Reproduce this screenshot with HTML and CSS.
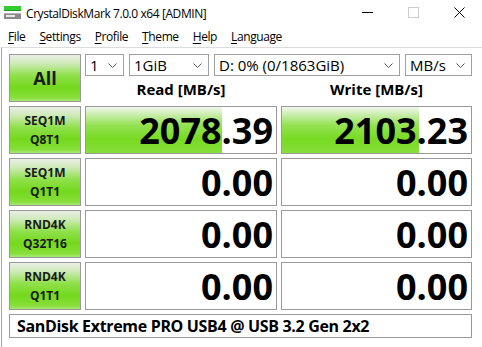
FILE: index.html
```html
<!DOCTYPE html>
<html lang="en">
<head>
  <meta charset="UTF-8">
  <title>CrystalDiskMark 7.0.0 x64 [ADMIN]</title>
  <link rel="stylesheet" href="styles.css">
</head>
<body>
  <div class="titlebar">
    <svg class="app-icon" width="18" height="16" viewBox="0 0 18 16">
      <rect x="0" y="0" width="17" height="5" fill="#33cc33"/>
      <rect x="0" y="4" width="17" height="1" fill="#1f9a1f"/>
      <rect x="0" y="7" width="17" height="6" fill="#8a8a8a"/>
      <rect x="0" y="7" width="17" height="1" fill="#b5b5b5"/>
      <rect x="2" y="9" width="9" height="2" fill="#e8e8e8"/>
    </svg>
    <span class="title">CrystalDiskMark 7.0.0 x64 [ADMIN]</span>
    <div class="controls">
      <span class="ctl">
        <svg width="11" height="11" viewBox="0 0 11 11"><line x1="0" y1="5.5" x2="11" y2="5.5" stroke="#000" stroke-width="1"/></svg>
      </span>
      <span class="ctl">
        <svg width="11" height="11" viewBox="0 0 11 11"><rect x="0.5" y="0.5" width="10" height="10" fill="none" stroke="#cccccc" stroke-width="1"/></svg>
      </span>
      <span class="ctl">
        <svg width="11" height="11" viewBox="0 0 11 11"><path d="M0.5 0.5 L10.5 10.5 M10.5 0.5 L0.5 10.5" stroke="#000" stroke-width="1"/></svg>
      </span>
    </div>
  </div>

  <div class="menubar">
    <span class="menu"><u>F</u>ile</span>
    <span class="menu"><u>S</u>ettings</span>
    <span class="menu"><u>P</u>rofile</span>
    <span class="menu"><u>T</u>heme</span>
    <span class="menu"><u>H</u>elp</span>
    <span class="menu"><u>L</u>anguage</span>
  </div>

  <div class="main">
    <div class="grid">
      <div class="test-btn all">All</div>

      <div class="top-right">
        <div class="combos">
          <div class="combo c-count"><span>1</span><svg width="9" height="5" viewBox="0 0 9 5"><polyline points="0.5,0.5 4.5,4.5 8.5,0.5" fill="none" stroke="#555" stroke-width="1"/></svg></div>
          <div class="combo c-size"><span>1GiB</span><svg width="9" height="5" viewBox="0 0 9 5"><polyline points="0.5,0.5 4.5,4.5 8.5,0.5" fill="none" stroke="#555" stroke-width="1"/></svg></div>
          <div class="combo c-drive"><span>D: 0% (0/1863GiB)</span><svg width="9" height="5" viewBox="0 0 9 5"><polyline points="0.5,0.5 4.5,4.5 8.5,0.5" fill="none" stroke="#555" stroke-width="1"/></svg></div>
          <div class="combo c-unit"><span>MB/s</span><svg width="9" height="5" viewBox="0 0 9 5"><polyline points="0.5,0.5 4.5,4.5 8.5,0.5" fill="none" stroke="#555" stroke-width="1"/></svg></div>
        </div>
        <div class="heads">
          <div class="head">Read [MB/s]</div>
          <div class="head">Write [MB/s]</div>
        </div>
      </div>

      <div class="test-btn"><span>SEQ1M</span><span>Q8T1</span></div>
      <div class="value"><div class="bar" style="width: 71.5%"></div><span>2078.39</span></div>
      <div class="value"><div class="bar" style="width: 72.5%"></div><span>2103.23</span></div>

      <div class="test-btn"><span>SEQ1M</span><span>Q1T1</span></div>
      <div class="value"><span>0.00</span></div>
      <div class="value"><span>0.00</span></div>

      <div class="test-btn"><span>RND4K</span><span>Q32T16</span></div>
      <div class="value"><span>0.00</span></div>
      <div class="value"><span>0.00</span></div>

      <div class="test-btn"><span>RND4K</span><span>Q1T1</span></div>
      <div class="value"><span>0.00</span></div>
      <div class="value"><span>0.00</span></div>

      <div class="name">SanDisk Extreme PRO USB4 @ USB 3.2 Gen 2x2</div>
    </div>
  </div>
</body>
</html>
```

FILE: styles.css
```css
body {
  margin: 0;
  padding: 0;
  width: 482px;
  height: 347px;
  overflow: hidden;
  background-color: #fff;
  font-family: "Open Sans", "Noto Sans", sans-serif;
  color: #000;
}
.titlebar {
  height: 25px;
  display: flex;
  align-items: center;
}
.app-icon {
  margin-left: 4px;
  margin-top: 2px;
}
.title {
  margin-left: 4px;
  margin-top: 1px;
  font-size: 12px;
  letter-spacing: -0.42px;
  color: #000;
}
.controls {
  margin-left: auto;
  display: flex;
  height: 25px;
}
.ctl {
  width: 46px;
  display: flex;
  align-items: center;
  justify-content: center;
}
.menubar {
  height: 22px;
  display: flex;
  align-items: center;
  padding-left: 1px;
}
.menu {
  font-size: 12px;
  letter-spacing: -0.4px;
  padding: 0 7px;
}
.menu u {
  text-decoration-thickness: 1px;
  text-underline-offset: 2px;
}
.main {
  margin-left: 1px;
  width: 478px;
  height: 298px;
  border: 1px solid #a6a6a6;
  border-top-color: #dcdcdc;
  padding: 6px 0 0 7px;
  box-sizing: content-box;
}
.grid {
  display: grid;
  grid-template-columns: 72px 192px 191px;
  grid-template-rows: 48px 48px 48px 48px 48px 24px;
  column-gap: 4px;
  row-gap: 4px;
}
.test-btn {
  border: 1px solid #9a9a9a;
  background: linear-gradient(#eaeee6 0%, #cfeab8 18%, #8fe04a 45%, #74d81c 70%, #86df38 92%, #a6e872 100%);
  display: flex;
  flex-direction: column;
  align-items: center;
  justify-content: center;
  font-weight: 700;
  font-size: 12px;
  line-height: 19px;
  color: #1a1a1a;
}
.test-btn.all {
  font-size: 18px;
}
.top-right {
  grid-column: 2 / 4;
  display: flex;
  flex-direction: column;
}
.combos {
  display: flex;
  gap: 5px;
  height: 24px;
}
.combo {
  border: 1px solid #a0a0a0;
  background-color: #fff;
  display: flex;
  align-items: center;
  justify-content: space-between;
  padding: 0 6px 0 4px;
  font-size: 15px;
  box-sizing: border-box;
}
.combo span {
  margin-top: -1px;
}
.c-count { width: 39px; }
.c-size { width: 80px; }
.c-drive { width: 186px; }
.c-unit { width: 67px; }
.heads {
  display: grid;
  grid-template-columns: 192px 191px;
  column-gap: 4px;
  flex: 1;
}
.head {
  text-align: center;
  font-weight: 700;
  font-size: 15px;
  line-height: 26px;
}
.value {
  position: relative;
  border: 1px solid #9a9a9a;
  background-color: #fff;
  display: flex;
  align-items: center;
  justify-content: flex-end;
  overflow: hidden;
}
.bar {
  position: absolute;
  left: 0;
  top: 0;
  bottom: 0;
  background: linear-gradient(#f2f8ee 0%, #cdeeb2 15%, #94e252 40%, #78da22 70%, #86df3a 100%);
}
.value span {
  position: relative;
  font-weight: 700;
  font-size: 36px;
  line-height: 40px;
  padding-right: 3px;
  margin-top: 2px;
}
.name {
  grid-column: 1 / 4;
  border: 1px solid #9a9a9a;
  background-color: #fff;
  display: flex;
  align-items: center;
  padding-left: 7px;
  font-weight: 700;
  font-size: 16px;
  letter-spacing: -0.33px;
}
```
